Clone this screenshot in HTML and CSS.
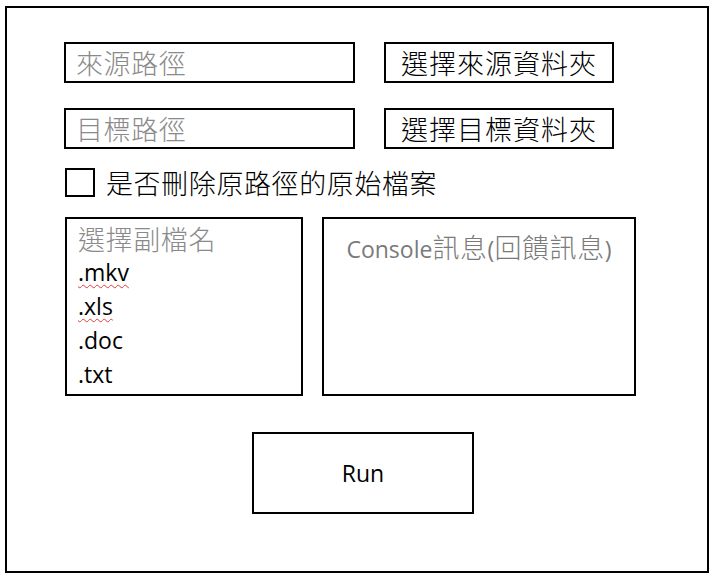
FILE: index.html
```html
<!DOCTYPE html>
<html lang="zh-Hant">
<head>
	<meta charset="UTF-8">
	<title>檔案搬移</title>
	<link rel="stylesheet" href="styles.css">
</head>
<body>
	<section class="frame">
		<div class="row">
			<input class="path" type="text" placeholder="來源路徑">
			<button class="pick">選擇來源資料夾</button>
		</div>
		<div class="row">
			<input class="path" type="text" placeholder="目標路徑">
			<button class="pick">選擇目標資料夾</button>
		</div>
		<label class="check">
			<input type="checkbox">
			<span>是否刪除原路徑的原始檔案</span>
		</label>
		<div class="boxes">
			<div class="ext">
				<div class="ext-title">選擇副檔名</div>
				<div class="ext-item typo">.mkv</div>
				<div class="ext-item typo">.xls</div>
				<div class="ext-item">.doc</div>
				<div class="ext-item">.txt</div>
			</div>
			<div class="console">
				<span class="latin">Console</span>訊息<span class="latin">(</span>回饋訊息<span class="latin">)</span>
			</div>
		</div>
		<button class="run">Run</button>
	</section>
</body>
</html>
```

FILE: styles.css
```css
*{
	margin: 0;
	padding: 0;
	box-sizing: border-box;
}
body{
	font: 300 27px "Noto Sans CJK TC", "Noto Sans CJK SC", sans-serif;
	letter-spacing: 0.6px;
	color: #000;
	background-color: #fff;
}
.frame{
	width: 704px;
	height: 567px;
	margin: 6px 0 0 5px;
	border: 2px solid #000;
	padding: 34px 0 0 57px;
	display: flex;
	flex-direction: column;
	align-items: flex-start;
}
.row{
	display: flex;
	gap: 29px;
	margin-bottom: 25px;
}
.row + .row{
	margin-bottom: 19px;
}
.path{
	width: 291px;
	height: 41px;
	border: 2px solid #000;
	padding: 0 10px;
	font: inherit;
	letter-spacing: inherit;
	outline: none;
	background: #fff;
}
.path::placeholder{
	color: #8a8a8a;
}
.pick{
	width: 230px;
	height: 41px;
	border: 2px solid #000;
	background: #fff;
	font: inherit;
	letter-spacing: 1px;
	color: #000;
	line-height: 1;
}
.check{
	display: flex;
	align-items: center;
	gap: 11px;
	margin-left: 1px;
	line-height: 29px;
}
.check input{
	-webkit-appearance: none;
	appearance: none;
	width: 30px;
	height: 29px;
	border: 2px solid #000;
	background: #fff;
	margin: 0;
}
.boxes{
	display: flex;
	gap: 19px;
	margin: 20px 0 0 1px;
}
.ext, .console{
	height: 179px;
	border: 2px solid #000;
}
.ext{
	width: 238px;
	padding: 3px 0 0 11px;
	line-height: 33px;
}
.ext-title{
	color: #8a8a8a;
}
.ext-item{
	font: 400 23px "Open Sans", sans-serif;
	letter-spacing: 0;
	line-height: 34px;
}
.typo{
	text-decoration: underline wavy #e23b3b;
	text-decoration-thickness: 1px;
	text-underline-offset: 3px;
}
.console{
	width: 314px;
	padding-top: 11px;
	text-align: center;
	color: #7a7a7a;
	line-height: 33px;
}
.latin{
	font: 400 23px "Open Sans", sans-serif;
	letter-spacing: 0;
}
.run{
	width: 222px;
	height: 82px;
	margin: 36px 0 0 188px;
	border: 2px solid #000;
	background: #fff;
	font: 400 23px "Open Sans", sans-serif;
	letter-spacing: 0;
	color: #000;
}
```
